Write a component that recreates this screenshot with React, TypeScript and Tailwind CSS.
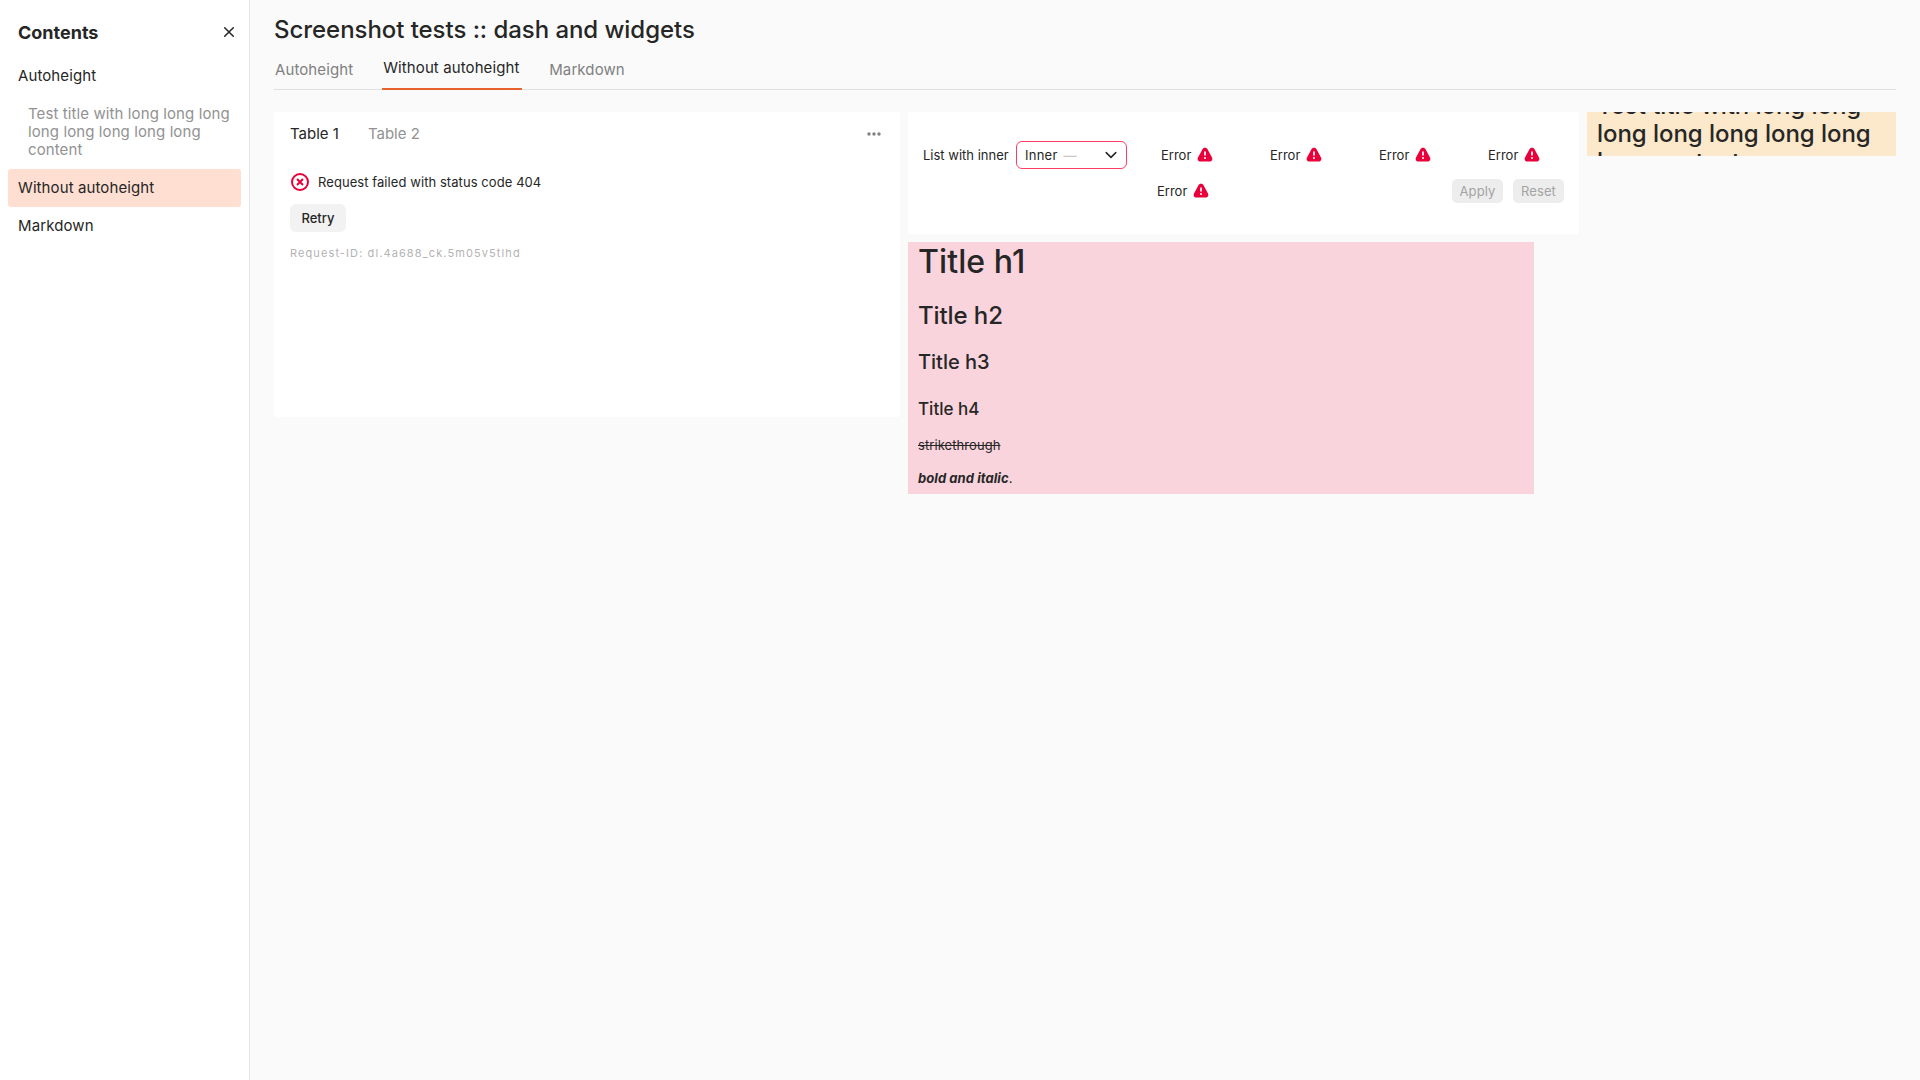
import React from "react";

function WarningIcon() {
  return (
    <svg width="16" height="16" viewBox="0 0 16 16" className="shrink-0" fill="#e9003a">
      <path
        fillRule="evenodd"
        clipRule="evenodd"
        d="M5.6 2.1C6.7.3 9.3.3 10.4 2.1l4.6 8.3c1 1.900-.2 4-2.400 4H3.400c-2.200 0-3.400-2.100-2.400-4zM8 4.3a.85.85 0 0 1 .85.85v2.7a.85.85 0 0 1-1.7 0v-2.7A.85.85 0 0 1 8 4.300m1 6.600a1 1 0 1 1-2 0 1 1 0 0 1 2 0"
      />
    </svg>
  );
}

function ErrorControl() {
  return (
    <div className="flex h-7 items-center gap-[6px]">
      <span className="pt-px">Error</span>
      <WarningIcon />
    </div>
  );
}

function Sidebar() {
  return (
    <aside className="w-[250px] shrink-0 border-r border-[#e5e5e5] bg-white px-2">
      <div className="flex h-[57px] items-center justify-between pt-2 pr-1 pl-[10px]">
        <h2 className="text-[18px] leading-6 font-bold">Contents</h2>
        <svg width="16" height="16" viewBox="0 0 16 16" fill="none" stroke="#262626" strokeWidth="1.5" strokeLinecap="round" className="mb-[2px]">
          <path d="m3.7 3.7 8.6 8.6M12.3 3.7l-8.6 8.6" />
        </svg>
      </div>
      <nav className="text-[15px] leading-[18px] tracking-[0.1px]">
        <div className="p-[10px]">Autoheight</div>
        <div className="py-[10px] pr-2 pl-5 text-[#929292]">Test title with long long long long long long long long content</div>
        <div className="rounded-[3px] bg-[#ffdfd2] p-[10px]">Without autoheight</div>
        <div className="p-[10px]">Markdown</div>
      </nav>
    </aside>
  );
}

function TableWidget() {
  return (
    <section className="h-[305px] w-[626px] rounded-[3px] bg-white px-4">
      <div className="flex h-11 items-center text-[15px]">
        <span>Table 1</span>
        <span className="ml-[29px] text-[#929292]">Table 2</span>
        <svg width="16" height="16" viewBox="0 0 16 16" fill="#808080" className="mr-[2px] ml-auto">
          <circle cx="3" cy="8" r="1.7" />
          <circle cx="8" cy="8" r="1.7" />
          <circle cx="13" cy="8" r="1.7" />
        </svg>
      </div>
      <div className="mt-4 flex h-5 items-center text-[13px]">
        <svg width="20" height="20" viewBox="0 0 20 20" fill="none" stroke="#e9003a" strokeWidth="2">
          <circle cx="10" cy="10" r="8" />
          <path d="m7 7 6 6M13 7l-6 6" />
        </svg>
        <span className="ml-2 pt-px tracking-[0.07px]">Request failed with status code 404</span>
      </div>
      <button className="mt-3 block h-7 w-14 rounded-md bg-[#f2f2f2] pt-px text-center text-[13px] font-medium">Retry</button>
      <div className="mt-3 text-[11px] leading-[18px] tracking-[1.1px] text-[#b3b3b3]">Request-ID: dl.4a688_ck.5m05v5tlhd</div>
    </section>
  );
}

function SelectorsWidget() {
  return (
    <section className="h-[122px] w-[671px] rounded-[3px] bg-white pt-[29px] pr-[15px] pl-[15px] text-[13px]">
      <div className="flex h-7 items-center">
        <span className="w-[86px] pt-px whitespace-nowrap">List with inner</span>
        <div className="ml-[7px] flex h-7 w-[111px] items-center rounded-md border border-[#ff3d64] pr-[7px] pl-2">
          <span className="pt-px tracking-[0.25px]">Inner</span>
          <span className="ml-[6px] pt-px font-medium text-[#c8c8c8]">—</span>
          <svg width="16" height="16" viewBox="0 0 16 16" fill="none" stroke="#262626" strokeWidth="1.5" strokeLinecap="round" strokeLinejoin="round" className="ml-auto">
            <path d="m3.2 5.6 4.8 4.8 4.8-4.8" />
          </svg>
        </div>
        <div className="ml-[34px] w-[109px]"><ErrorControl /></div>
        <div className="w-[109px]"><ErrorControl /></div>
        <div className="w-[109px]"><ErrorControl /></div>
        <ErrorControl />
      </div>
      <div className="mt-2 flex h-7 items-center pl-[234px]">
        <ErrorControl />
        <button className="ml-auto h-6 w-[51px] rounded-[5px] bg-[#ededed] pt-px tracking-[0.1px] text-[#a3a3a3]">Apply</button>
        <button className="ml-[10px] h-6 w-[51px] rounded-[5px] bg-[#ededed] pt-px tracking-[0.1px] text-[#a3a3a3]">Reset</button>
      </div>
    </section>
  );
}

function MarkdownWidget() {
  return (
    <section className="mt-2 h-[252px] w-[626px] overflow-hidden bg-[#fad4dd] px-[10px] text-[13px] leading-[18px]">
      <h1 className="text-[32px] leading-10 font-medium tracking-[0.1px]">Title h1</h1>
      <h2 className="mt-5 text-2xl leading-7 font-medium tracking-[-0.1px]">Title h2</h2>
      <h3 className="mt-5 text-xl leading-6 font-medium">Title h3</h3>
      <h4 className="mt-[23px] text-[17px] leading-6 font-medium">Title h4</h4>
      <p className="mt-[15px] tracking-[0.07px] line-through">strikethrough</p>
      <p className="mt-[15px]">
        <em className="font-bold tracking-[0.07px] italic">bold and italic</em>.
      </p>
    </section>
  );
}

export default function App() {
  return (
    <div className="flex h-screen w-full overflow-hidden bg-[#fafafa] font-['Inter',sans-serif] text-[#262626]">
      <Sidebar />
      <main className="min-w-0 flex-1 px-6 pt-4">
        <h1 className="text-2xl leading-7 font-medium tracking-[-0.05px]">Screenshot tests :: dash and widgets</h1>
        <nav className="flex h-[46px] items-end gap-[29px] border-b border-[#e0e0e0] pl-px text-[15px] leading-5 tracking-[0.1px] text-[#808080]">
          <span className="pb-[9px]">Autoheight</span>
          <span className="-mb-px w-[140px] rounded-[1px] border-b-2 border-[#e8612c] pb-[10px] pl-px text-[#262626]">Without autoheight</span>
          <span className="-ml-[2px] pb-[9px]">Markdown</span>
        </nav>
        <div className="mt-[22px] flex gap-2">
          <TableWidget />
          <div className="w-[671px]">
            <SelectorsWidget />
            <MarkdownWidget />
          </div>
          <section className="flex h-11 w-[309px] items-center overflow-hidden bg-[#fce8cb] px-[10px] text-2xl leading-7 font-medium tracking-[-0.05px]">
            <p>Test title with long long long long long long long long content</p>
          </section>
        </div>
      </main>
    </div>
  );
}
